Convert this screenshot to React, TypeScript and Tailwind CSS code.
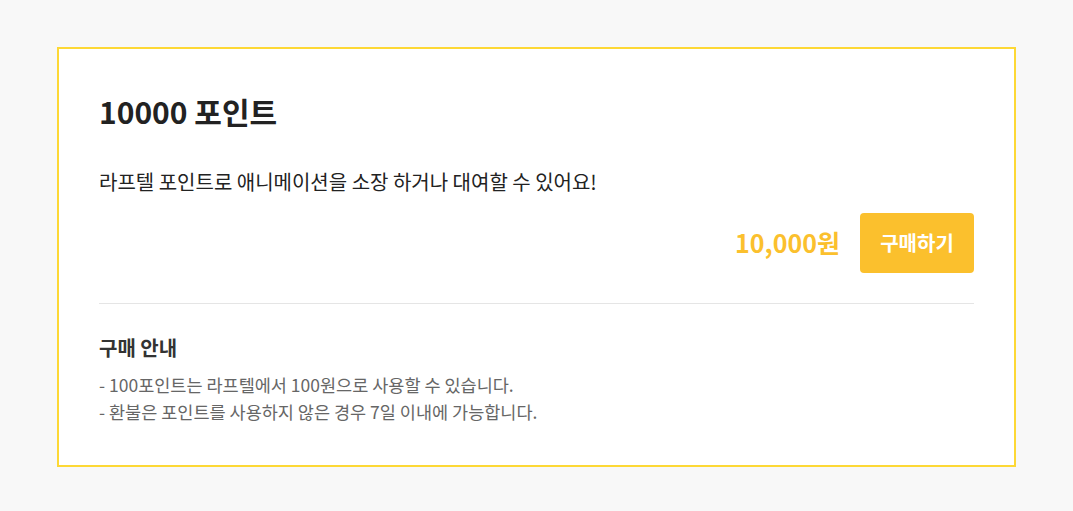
export default function App() {
  return (
    <div
      className="min-h-[511px] bg-[#f8f8f8] px-[57px] pt-[47px] pb-[44px]"
      style={{ fontFamily: '"Noto Sans CJK KR", "Noto Sans", sans-serif' }}
    >
      <div className="border-2 border-[#fdd835] bg-white px-10 pt-[42px] pb-[40px]">
        <h1 className="text-[30px] font-bold leading-[40px] text-[#222]">
          10000 포인트
        </h1>
        <p className="mt-[36px] text-[20px] leading-[30px] text-[#222]">
          라프텔 포인트로 애니메이션을 소장 하거나 대여할 수 있어요!
        </p>
        <div className="mt-[16px] flex items-center justify-end gap-5">
          <span className="text-[25px] font-bold text-[#fbc02d]">10,000원</span>
          <button className="h-[60px] w-[114px] rounded bg-[#fbc02d] text-[20px] font-bold text-white">
            구매하기
          </button>
        </div>
        <div className="mt-[30px] border-t border-[#e5e5e5]" />
        <h2 className="mt-[29px] text-[20px] font-bold leading-[30px] text-[#333]">
          구매 안내
        </h2>
        <ul className="mt-[8px] text-[17.5px] leading-[27px] text-[#666]">
          <li>- 100포인트는 라프텔에서 100원으로 사용할 수 있습니다.</li>
          <li>- 환불은 포인트를 사용하지 않은 경우 7일 이내에 가능합니다.</li>
        </ul>
      </div>
    </div>
  );
}
